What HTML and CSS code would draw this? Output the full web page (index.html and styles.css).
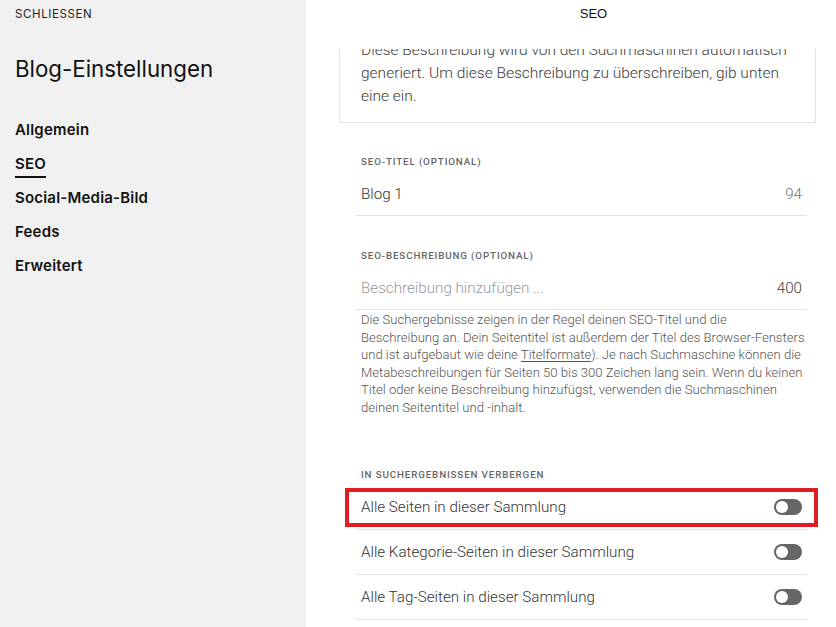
FILE: index.html
```html
<!DOCTYPE html>
<html lang="de">
<head>
<meta charset="utf-8">
<title>Blog-Einstellungen – SEO</title>
<link rel="stylesheet" href="styles.css">
</head>
<body>
<div class="app">
  <aside class="sidebar">
    <div class="close">SCHLIESSEN</div>
    <h1 class="side-title">Blog-Einstellungen</h1>
    <nav class="nav">
      <a class="nav-item">Allgemein</a>
      <a class="nav-item active">SEO</a>
      <a class="nav-item">Social-Media-Bild</a>
      <a class="nav-item">Feeds</a>
      <a class="nav-item">Erweitert</a>
    </nav>
  </aside>
  <main class="main">
    <header class="topbar">SEO</header>
    <div class="scroll">
      <div class="content">
        <div class="preview-box">
          Diese Beschreibung wird von den Suchmaschinen automatisch<br>
          generiert. Um diese Beschreibung zu überschreiben, gib unten<br>
          eine ein.
        </div>

        <div class="field first">
          <div class="label">SEO-Titel (optional)</div>
          <div class="input-row">
            <span class="value">Blog 1</span>
            <span class="count">94</span>
          </div>
        </div>

        <div class="field">
          <div class="label">SEO-Beschreibung (optional)</div>
          <div class="input-row">
            <span class="placeholder">Beschreibung hinzufügen ...</span>
            <span class="count dark">400</span>
          </div>
          <p class="help">Die Suchergebnisse zeigen in der Regel deinen SEO-Titel und die<br>Beschreibung an. Dein Seitentitel ist außerdem der Titel des Browser-Fensters<br>und ist aufgebaut wie deine <u>Titelformate</u>). Je nach Suchmaschine können die<br>Metabeschreibungen für Seiten 50 bis 300 Zeichen lang sein. Wenn du keinen<br>Titel oder keine Beschreibung hinzufügst, verwenden die Suchmaschinen<br>deinen Seitentitel und -inhalt.</p>
        </div>

        <div class="field hide">
          <div class="label tight">In Suchergebnissen verbergen</div>
          <div class="toggle-row">
            <span>Alle Seiten in dieser Sammlung</span>
            <span class="toggle"></span>
            <span class="highlight"></span>
          </div>
          <div class="toggle-row">
            <span>Alle Kategorie-Seiten in dieser Sammlung</span>
            <span class="toggle"></span>
          </div>
          <div class="toggle-row">
            <span>Alle Tag-Seiten in dieser Sammlung</span>
            <span class="toggle"></span>
          </div>
        </div>
      </div>
    </div>
  </main>
</div>
</body>
</html>
```
FILE: styles.css
```css
* { box-sizing: border-box; }
html, body { margin: 0; padding: 0; }
body {
  width: 836px;
  height: 627px;
  overflow: hidden;
  font-family: Roboto, "Liberation Sans", sans-serif;
  color: #333;
  background: #fff;
}
.app {
  display: flex;
  height: 627px;
}
.sidebar {
  width: 306px;
  flex: none;
  background: #f1f1f1;
  padding: 0 15px;
  font-family: Inter, "Noto Sans", sans-serif;
  color: #111;
}
.close {
  font-size: 11.5px;
  letter-spacing: 0.6px;
  line-height: 14px;
  padding-top: 7px;
  color: #222;
}
.side-title {
  margin: 35px 0 0;
  font-size: 22.3px;
  font-weight: 400;
  line-height: 26px;
  color: #111;
}
.nav {
  display: flex;
  flex-direction: column;
  margin-top: 38px;
}
.nav-item {
  display: block;
  font-size: 15px;
  font-weight: 600;
  letter-spacing: 0.2px;
  line-height: 20px;
  height: 34px;
  color: #111;
}
.nav-item.active {
  align-self: flex-start;
  position: relative;
}
.nav-item.active::after {
  content: "";
  position: absolute;
  left: 0;
  right: 0;
  top: 22px;
  height: 2px;
  background: #111;
}
.main {
  flex: 1;
  display: flex;
  flex-direction: column;
  min-width: 0;
}
.topbar {
  height: 49px;
  flex: none;
  padding: 7px 0 0 45px;
  text-align: center;
  font-size: 13px;
  line-height: 14px;
  color: #111;
  background: #fff;
  font-family: "Liberation Sans", Arial, sans-serif;
}
.scroll {
  flex: 1;
  overflow: hidden;
}
.content {
  padding: 0 20px 0 33px;
}
.preview-box {
  margin-top: -25px;
  border: 1px solid #e2e2e2;
  padding: 14px 21px 14px;
  font-size: 15.5px;
  line-height: 23px;
  color: #3a3a3a;
  font-weight: 300;
  white-space: nowrap;
}
.field {
  margin: 32px 9px 0 17px;
}
.field + .field { margin-top: 33px; }
.field.hide { margin-top: 51px; }
.label {
  padding-left: 5px;
  font-size: 9.8px;
  font-weight: 500;
  letter-spacing: 0.85px;
  line-height: 14px;
  text-transform: uppercase;
  color: #666;
}
.label.tight { margin-bottom: 3px; }
.input-row {
  display: flex;
  justify-content: space-between;
  padding: 14px 5px 10px;
  line-height: 22px;
  font-size: 15.2px;
  border-bottom: 1px solid #e3e3e3;
  font-weight: 300;
}
.value { color: #333; }
.placeholder { color: #999; }
.count { color: #777; }
.count.dark { color: #444; }
.help {
  margin: 1px 0 0;
  padding-left: 5px;
  font-size: 13.1px;
  line-height: 17.6px;
  color: #555;
  font-weight: 300;
  white-space: nowrap;
}
.help u { text-underline-offset: 2px; }
.toggle-row {
  position: relative;
  display: flex;
  align-items: center;
  justify-content: space-between;
  height: 45px;
  padding: 0 5px;
  border-bottom: 1px solid #e3e3e3;
  font-size: 15.2px;
  color: #333;
  font-weight: 300;
}
.toggle {
  position: relative;
  width: 28px;
  height: 16px;
  border-radius: 8px;
  background: #666;
}
.toggle::before {
  content: "";
  position: absolute;
  left: 2px;
  top: 2px;
  width: 12px;
  height: 12px;
  border-radius: 50%;
  background: #fff;
}
.highlight {
  position: absolute;
  left: -11px;
  top: 3px;
  width: 473px;
  height: 39px;
  border: 4px solid #e31b23;
  pointer-events: none;
}
```
